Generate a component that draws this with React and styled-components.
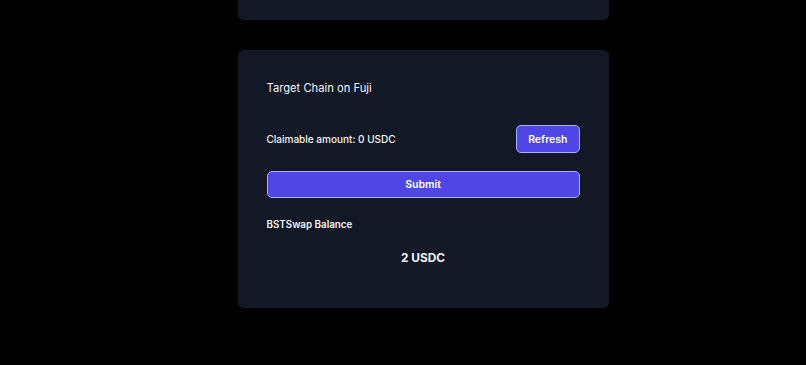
import React from 'react';
import styled, { createGlobalStyle } from 'styled-components';

const GlobalStyle = createGlobalStyle`
  html, body {
    margin: 0;
    padding: 0;
    background: #000;
    font-family: Inter, 'Noto Sans', sans-serif;
    color: #f3f4f6;
  }
`;

const Page = styled.div`
  min-height: 365px;
  display: flex;
  flex-direction: column;
  align-items: center;
  gap: 30px;
  margin-top: -100px;
  padding-left: 40px;
  background-color: #000;
`;

const Card = styled.div`
  width: 371px;
  box-sizing: border-box;
  background-color: #121826;
  border-radius: 6px;
  padding: ${({ $pad }) => $pad || '0'};
  height: ${({ $height }) => $height || 'auto'};
  display: flex;
  flex-direction: column;
`;

const Title = styled.h2`
  margin: 0;
  font-size: 11.2px;
  font-weight: 400;
  line-height: 16px;
  color: #f3f4f6;
`;

const Row = styled.div`
  display: flex;
  justify-content: space-between;
  align-items: center;
  margin-top: 29px;
`;

const Label = styled.p`
  margin: 0;
  font-size: 10px;
  font-weight: 500;
  line-height: 14px;
  color: #f3f4f6;
`;

const Button = styled.button`
  box-sizing: border-box;
  width: ${({ $full }) => ($full ? '100%' : 'auto')};
  height: ${({ $full }) => ($full ? '27px' : '28px')};
  padding: 0 11px;
  background-color: #4f46e5;
  color: #fff;
  border: 1px solid #a5b4fc;
  border-radius: 5px;
  font-family: inherit;
  font-size: 10.5px;
  font-weight: 600;
  cursor: pointer;
`;

const SubmitWrap = styled.div`
  margin-top: 18px;
`;

const BalanceLabel = styled(Label)`
  margin-top: 20px;
  font-weight: 600;
  font-size: 9.8px;
`;

const Amount = styled.p`
  margin: 18px 0 0;
  text-align: center;
  font-size: 11.8px;
  font-weight: 700;
  line-height: 16px;
  color: #f3f4f6;
`;

export default function App() {
  return (
    <>
      <GlobalStyle />
      <Page>
        <Card $height="120px" />
        <Card $pad="30px 29px 0" $height="258px">
          <Title>Target Chain on Fuji</Title>
          <Row>
            <Label>Claimable amount: 0 USDC</Label>
            <Button>Refresh</Button>
          </Row>
          <SubmitWrap>
            <Button $full>Submit</Button>
          </SubmitWrap>
          <BalanceLabel>BSTSwap Balance</BalanceLabel>
          <Amount>2 USDC</Amount>
        </Card>
      </Page>
    </>
  );
}
